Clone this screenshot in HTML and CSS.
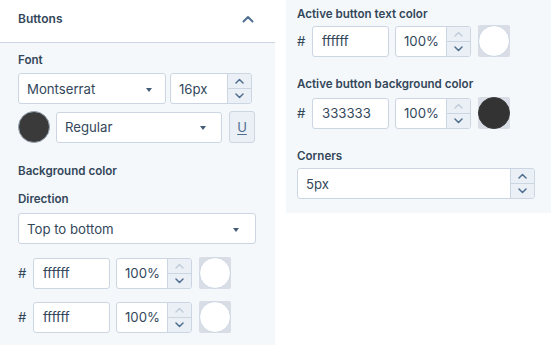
FILE: index.html
```html
<!DOCTYPE html>
<html>
<head>
<meta charset="utf-8">
<link rel="stylesheet" href="styles.css">
</head>
<body>
<div class="left">
  <div class="head">
    <span class="title">Buttons</span>
    <svg class="collapse" width="12" height="8" viewBox="0 0 12 8"><path d="M1.5 6.5 L6 2 L10.5 6.5" fill="none" stroke="#516f90" stroke-width="2" stroke-linecap="round" stroke-linejoin="round"/></svg>
  </div>
  <div class="body">
    <div class="label">Font</div>
    <div class="row font-row">
      <div class="select w-font"><span>Montserrat</span><i class="caret"></i></div>
      <div class="num w-size"><span class="val">16px</span><div class="spin"><span class="up"><svg width="9" height="6" viewBox="0 0 9 6"><path d="M1 5 L4.5 1.5 L8 5" fill="none" stroke="#516f90" stroke-width="1.5" stroke-linecap="round" stroke-linejoin="round"/></svg></span><span class="down"><svg width="9" height="6" viewBox="0 0 9 6"><path d="M1 1 L4.5 4.5 L8 1" fill="none" stroke="#516f90" stroke-width="1.5" stroke-linecap="round" stroke-linejoin="round"/></svg></span></div></div>
    </div>
    <div class="row style-row">
      <div class="dot dark"></div>
      <div class="select w-style"><span>Regular</span><i class="caret"></i></div>
      <div class="ubtn"><span>U</span></div>
    </div>
    <div class="label sec">Background color</div>
    <div class="label dir">Direction</div>
    <div class="select w-dir"><span>Top to bottom</span><i class="caret"></i></div>
    <div class="crow first">
      <span class="hash">#</span>
      <div class="text w-hex">ffffff</div>
      <div class="num w-pct"><span class="val">100%</span><div class="spin"><span class="up"><svg width="9" height="6" viewBox="0 0 9 6"><path d="M1 5 L4.5 1.5 L8 5" fill="none" stroke="#c3cedb" stroke-width="1.5" stroke-linecap="round" stroke-linejoin="round"/></svg></span><span class="down"><svg width="9" height="6" viewBox="0 0 9 6"><path d="M1 1 L4.5 4.5 L8 1" fill="none" stroke="#516f90" stroke-width="1.5" stroke-linecap="round" stroke-linejoin="round"/></svg></span></div></div>
      <div class="swatch"><div class="circ white"></div></div>
    </div>
    <div class="crow">
      <span class="hash">#</span>
      <div class="text w-hex">ffffff</div>
      <div class="num w-pct"><span class="val">100%</span><div class="spin"><span class="up"><svg width="9" height="6" viewBox="0 0 9 6"><path d="M1 5 L4.5 1.5 L8 5" fill="none" stroke="#c3cedb" stroke-width="1.5" stroke-linecap="round" stroke-linejoin="round"/></svg></span><span class="down"><svg width="9" height="6" viewBox="0 0 9 6"><path d="M1 1 L4.5 4.5 L8 1" fill="none" stroke="#516f90" stroke-width="1.5" stroke-linecap="round" stroke-linejoin="round"/></svg></span></div></div>
      <div class="swatch"><div class="circ white"></div></div>
    </div>
  </div>
</div>
<div class="right">
  <div class="label">Active button text color</div>
  <div class="crow r1">
    <span class="hash">#</span>
    <div class="text w-hex">ffffff</div>
    <div class="num w-pct"><span class="val">100%</span><div class="spin"><span class="up"><svg width="9" height="6" viewBox="0 0 9 6"><path d="M1 5 L4.5 1.5 L8 5" fill="none" stroke="#c3cedb" stroke-width="1.5" stroke-linecap="round" stroke-linejoin="round"/></svg></span><span class="down"><svg width="9" height="6" viewBox="0 0 9 6"><path d="M1 1 L4.5 4.5 L8 1" fill="none" stroke="#516f90" stroke-width="1.5" stroke-linecap="round" stroke-linejoin="round"/></svg></span></div></div>
    <div class="swatch"><div class="circ white"></div></div>
  </div>
  <div class="label sec2">Active button background color</div>
  <div class="crow r2">
    <span class="hash">#</span>
    <div class="text w-hex">333333</div>
    <div class="num w-pct"><span class="val">100%</span><div class="spin"><span class="up"><svg width="9" height="6" viewBox="0 0 9 6"><path d="M1 5 L4.5 1.5 L8 5" fill="none" stroke="#c3cedb" stroke-width="1.5" stroke-linecap="round" stroke-linejoin="round"/></svg></span><span class="down"><svg width="9" height="6" viewBox="0 0 9 6"><path d="M1 1 L4.5 4.5 L8 1" fill="none" stroke="#516f90" stroke-width="1.5" stroke-linecap="round" stroke-linejoin="round"/></svg></span></div></div>
    <div class="swatch"><div class="circ darkc"></div></div>
  </div>
  <div class="label sec3">Corners</div>
  <div class="num w-corner r3"><span class="val">5px</span><div class="spin"><span class="up"><svg width="9" height="6" viewBox="0 0 9 6"><path d="M1 5 L4.5 1.5 L8 5" fill="none" stroke="#516f90" stroke-width="1.5" stroke-linecap="round" stroke-linejoin="round"/></svg></span><span class="down"><svg width="9" height="6" viewBox="0 0 9 6"><path d="M1 1 L4.5 4.5 L8 1" fill="none" stroke="#516f90" stroke-width="1.5" stroke-linecap="round" stroke-linejoin="round"/></svg></span></div></div>
</div>
</body>
</html>
```

FILE: styles.css
```css
* { box-sizing: border-box; }
html, body { margin: 0; padding: 0; }
body {
  width: 551px;
  height: 345px;
  overflow: hidden;
  background: #fff;
  font-family: Inter, "Noto Sans", sans-serif;
  color: #33475b;
  display: flex;
  align-items: flex-start;
}
.left {
  width: 275px;
  height: 345px;
  display: flex;
  flex-direction: column;
}
.head {
  height: 43px;
  flex: none;
  border-bottom: 1px solid #cbd6e2;
  display: flex;
  align-items: center;
  justify-content: space-between;
  padding: 0 21px 5px 18px;
  background: #fff;
}
.title { font-size: 12px; font-weight: 600; line-height: 16px; }
.body {
  flex: 1;
  background: #f5f8fa;
  padding: 9px 19px 0 18px;
}
.label {
  font-size: 11.6px;
  font-weight: 600;
  line-height: 16px;
  color: #33475b;
}
.row { display: flex; align-items: center; }
.font-row { margin-top: 5px; gap: 4px; }
.style-row { margin-top: 7px; }
.sec { margin-top: 20px; }
.dir { margin-top: 12px; }

.select, .text, .num {
  height: 31px;
  background: #fff;
  border: 1px solid #cbd6e2;
  border-radius: 3px;
  font-size: 13.2px;
  display: flex;
  align-items: center;
}
.select { padding: 0 13px 0 8px; justify-content: space-between; }
.caret {
  width: 0; height: 0;
  border-left: 3.5px solid transparent;
  border-right: 3.5px solid transparent;
  border-top: 4px solid #425b76;
  margin-top: 2px;
}
.w-font { width: 148px; }
.w-size { width: 82px; }
.w-style { width: 166px; margin-left: 6px; }
.w-dir { width: 238px; margin-top: 6px; padding-right: 16px; }
.w-style { padding-right: 15px; }
.num { padding-left: 8px; overflow: hidden; }
.num .val { flex: 1; }
.spin {
  width: 24px;
  height: 100%;
  background: #eaf0f6;
  border-left: 1px solid #cbd6e2;
  display: flex;
  flex-direction: column;
}
.spin span {
  flex: 1;
  display: flex;
  align-items: center;
  justify-content: center;
}
.spin .up { border-bottom: 1px solid #cbd6e2; }
.spin svg { display: block; }

.dot {
  width: 32px; height: 32px;
  border-radius: 50%;
  flex: none;
}
.dot.dark { background: #3a3a3a; border: 1px solid #9aa7b5; }
.ubtn {
  width: 26px; height: 32px;
  margin-left: 7px;
  background: #eaf0f6;
  border: 1px solid #cbd6e2;
  border-radius: 3px;
  display: flex;
  align-items: center;
  justify-content: center;
  font-size: 13px;
  color: #516f90;
  text-decoration: underline;
  text-underline-offset: 2px;
}

.crow { display: flex; align-items: center; margin-top: 12px; }
.crow.first { margin-top: 13px; }
.hash { width: 8px; font-size: 13.2px; margin-right: 7px; color: #33475b; }
.text { padding-left: 9px; }
.w-hex { width: 77px; }
.w-pct { width: 76px; margin-left: 6px; justify-content: space-between; }
.w-pct .spin { width: 24px; flex: none; }
.swatch {
  width: 32px; height: 32px;
  margin-left: 7px;
  background: #d9dde6;
  border-radius: 2px;
}
.circ {
  width: 32px; height: 32px;
  border-radius: 50%;
}
.circ.white { background: #fff; border: 1px solid #cbd6e2; }
.circ.darkc { background: #333333; border: 1px solid #3a3a3a; }

.right {
  margin-left: 11px;
  flex: 1;
  background: #f5f8fa;
  padding: 6px 16px 14px 11px;
}
.right .crow.r1 { margin-top: 3px; }
.sec2 { margin-top: 19px; }
.right .crow.r2 { margin-top: 5px; }
.sec3 { margin-top: 19px; }
.w-corner { width: 238px; margin-top: 4px; }
```
